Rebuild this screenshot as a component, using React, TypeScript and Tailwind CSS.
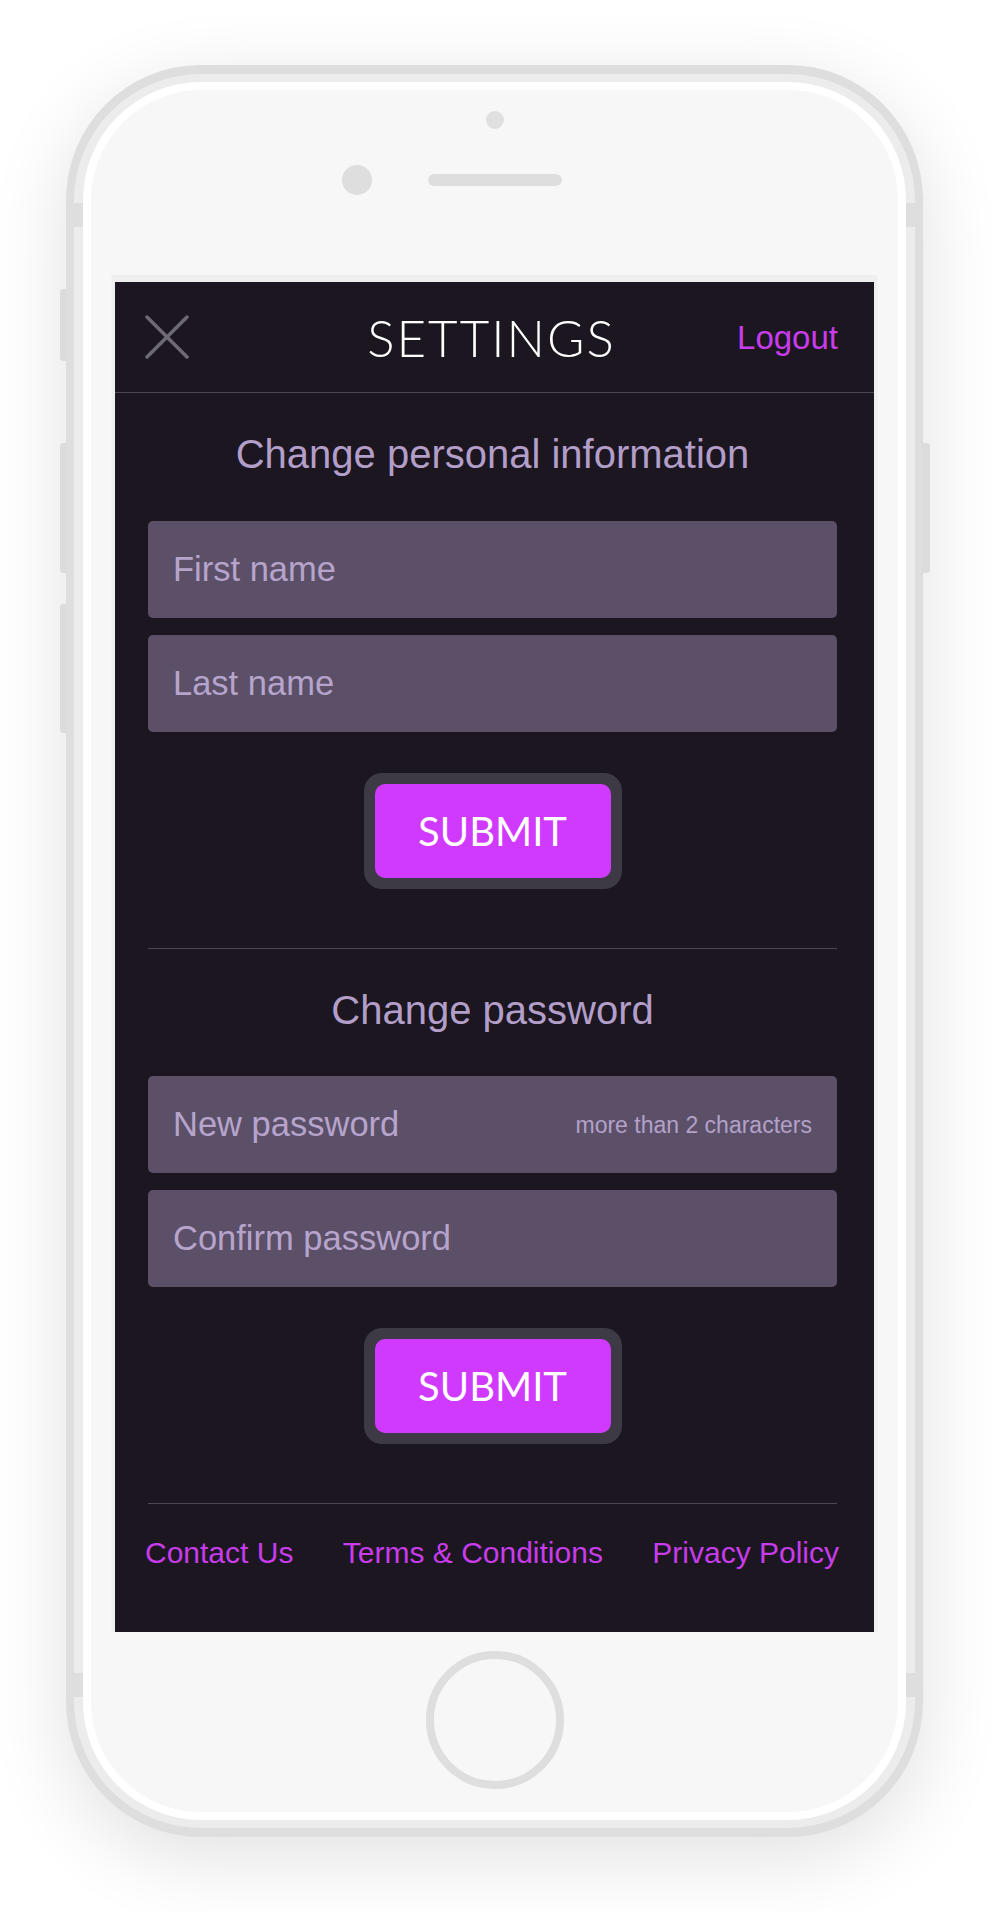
import React from 'react';

type FieldProps = {
    placeholder: string;
    type?: string;
    hint?: string;
};

const CloseIcon = () => (
    <svg width="44" height="44" viewBox="0 0 44 44" fill="none" stroke="#6e6a73" strokeWidth="3.5" strokeLinecap="round">
        <line x1="2" y1="2" x2="42" y2="42" />
        <line x1="42" y1="2" x2="2" y2="42" />
    </svg>
);

const Field: React.FC<FieldProps> = ({ placeholder, type = 'text', hint }) => (
    <div className="relative">
        <input
            type={type}
            placeholder={placeholder}
            className="block h-[97px] w-full rounded-[5px] bg-[#5b5068] px-[25px] text-[34.5px] text-[#ece4f5] outline-none placeholder:text-[#b7a4cc]"
        />
        {hint && (
            <span className="pointer-events-none absolute right-[25px] top-1/2 -translate-y-1/2 text-[23px] text-[#b3a1c8]">
                {hint}
            </span>
        )}
    </div>
);

const SubmitButton = () => (
    <div className="mx-auto h-[116px] w-[258px] rounded-[18px] bg-[#3e3a45] p-[11px]">
        <button
            type="submit"
            className="flex h-full w-full items-center justify-center rounded-[10px] bg-[#d03aff] font-['Lato',sans-serif] text-[40px] text-white"
        >
            SUBMIT
        </button>
    </div>
);

const SectionTitle = ({ children }: { children: React.ReactNode }) => (
    <h2 className="h-[40px] text-center text-[40px] leading-[40px] text-[#b29ec8]">{children}</h2>
);

export default function App() {
    return (
        <div className="min-h-[1912px] w-full bg-white pl-[66px] pt-[65px] font-['Liberation_Sans',Arial,sans-serif]">
            {/* phone body */}
            <div className="relative h-[1772px] w-[857px] rounded-[135px] bg-[#dedede] px-[8px] py-[9px] shadow-[0_20px_80px_rgba(0,0,0,0.12)]">
                {/* side buttons */}
                <div className="absolute left-[-6px] top-[224px] h-[72px] w-[7px] rounded-l-[3px] bg-[#dcdcdc]" />
                <div className="absolute left-[-6px] top-[378px] h-[130px] w-[7px] rounded-l-[3px] bg-[#dcdcdc]" />
                <div className="absolute left-[-6px] top-[539px] h-[129px] w-[7px] rounded-l-[3px] bg-[#dcdcdc]" />
                <div className="absolute right-[-7px] top-[378px] h-[130px] w-[8px] rounded-r-[3px] bg-[#dcdcdc]" />

                <div className="h-full rounded-[127px] bg-[#ececec] px-[9px] py-[8px]">
                    <div className="h-full rounded-[118px] bg-white p-[8px]">
                        <div className="flex h-full flex-col items-center rounded-[110px] bg-[#f7f7f7]">
                            {/* sensor + camera + speaker */}
                            <div className="mt-[21px] h-[18px] w-[18px] rounded-full bg-[#e0e0e0]" />
                            <div className="mt-[36px] flex h-[30px] items-center gap-[56px]">
                                <div className="h-[30px] w-[30px] rounded-full bg-[#dedede]" />
                                <div className="h-[12px] w-[134px] rounded-full bg-[#dedede]" />
                                <div className="h-[30px] w-[30px]" />
                            </div>

                            {/* screen */}
                            <div className="mt-[87px] flex h-[1350px] w-[759px] flex-col bg-[#1b1620] shadow-[0_-3.5px_0_3.5px_#efefef]">
                                <header className="grid h-[111px] grid-cols-[1fr_auto_1fr] items-center border-b border-[#4b4651] pl-[30px] pr-[36px]">
                                    <button type="button" className="justify-self-start">
                                        <CloseIcon />
                                    </button>
                                    <h1 className="font-['Lato',sans-serif] text-[51px] font-light leading-none tracking-[2px] text-white">
                                        SETTINGS
                                    </h1>
                                    <a href="#" className="justify-self-end text-[33px] leading-none text-[#c83ceb]">
                                        Logout
                                    </a>
                                </header>

                                <div className="flex flex-col pl-[33px] pr-[37px]">
                                    <form className="flex flex-col" onSubmit={(e) => e.preventDefault()}>
                                        <div className="mt-[41px]">
                                            <SectionTitle>Change personal information</SectionTitle>
                                        </div>
                                        <div className="mt-[47px] flex flex-col gap-[17px]">
                                            <Field placeholder="First name" />
                                            <Field placeholder="Last name" />
                                        </div>
                                        <div className="mt-[41px]">
                                            <SubmitButton />
                                        </div>
                                    </form>

                                    <div className="mt-[59px] h-px bg-[#4b4651]" />

                                    <form className="flex flex-col" onSubmit={(e) => e.preventDefault()}>
                                        <div className="mt-[41px]">
                                            <SectionTitle>Change password</SectionTitle>
                                        </div>
                                        <div className="mt-[46px] flex flex-col gap-[17px]">
                                            <Field placeholder="New password" type="password" hint="more than 2 characters" />
                                            <Field placeholder="Confirm password" type="password" />
                                        </div>
                                        <div className="mt-[41px]">
                                            <SubmitButton />
                                        </div>
                                    </form>

                                    <div className="mt-[59px] h-px bg-[#4b4651]" />

                                    <nav className="-ml-[3px] -mr-[2px] mt-[34px] flex justify-between text-[30px] leading-[30px] text-[#c83ceb]">
                                        <a href="#">Contact Us</a>
                                        <a href="#">Terms &amp; Conditions</a>
                                        <a href="#">Privacy Policy</a>
                                    </nav>
                                </div>
                            </div>

                            {/* home button */}
                            <div className="mt-[19px] h-[138px] w-[138px] rounded-full border-[8px] border-[#dedede]" />
                        </div>
                    </div>
                </div>

                {/* antenna lines */}
                <div className="absolute left-[8px] top-[138px] h-[24px] w-[9px] bg-[#dedede]" />
                <div className="absolute right-[8px] top-[138px] h-[24px] w-[9px] bg-[#dedede]" />
                <div className="absolute left-[8px] top-[1608px] h-[24px] w-[9px] bg-[#dedede]" />
                <div className="absolute right-[8px] top-[1608px] h-[24px] w-[9px] bg-[#dedede]" />
            </div>
        </div>
    );
}
